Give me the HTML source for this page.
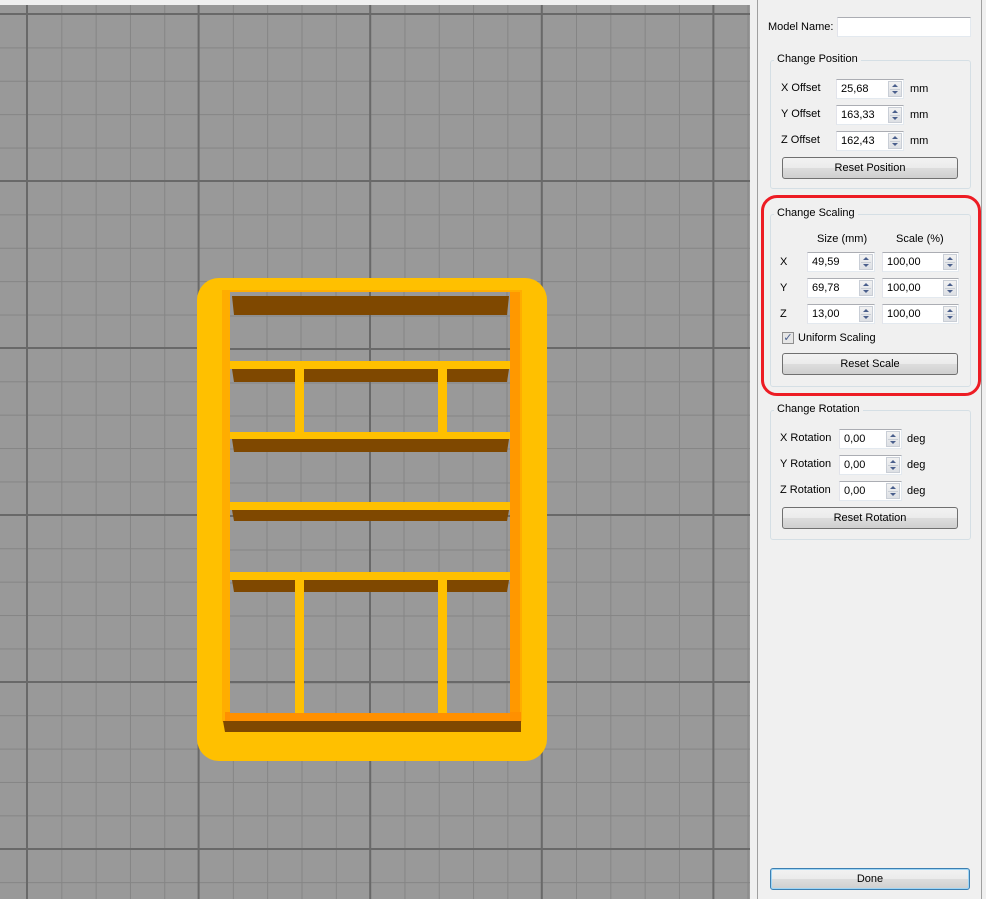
<!DOCTYPE html>
<html><head><meta charset="utf-8"><style>
*{margin:0;padding:0;box-sizing:border-box}
body{width:986px;height:899px;overflow:hidden;background:#f0f0f0;font-family:"Liberation Sans",sans-serif;font-size:11px;color:#000;position:relative}
#vp{position:absolute;left:0;top:5px;width:750px;height:894px;background-color:#999;
background-image:
linear-gradient(90deg,#696969 2px,transparent 2px),
linear-gradient(180deg,#696969 2px,transparent 2px),
linear-gradient(90deg,#858585 1px,transparent 1px),
linear-gradient(180deg,#858585 1px,transparent 1px);
background-size:171.6px 100%,100% 167px,34.32px 100%,100% 33.4px;
background-position:26px 0,0 8px,27px 0,0 9px}
.a{position:absolute}
.panel{position:absolute;left:750px;top:0;width:236px;height:899px;background:#f0f0f0}
.sep{position:absolute;left:757px;top:0;width:1px;height:899px;background:#a0a0a0}
.sep2{position:absolute;left:981px;top:0;width:1px;height:899px;background:#a0a0a0}
.grp{position:absolute;border:1px solid #d5dfe5;border-radius:3px}
.gt{position:absolute;background:#f0f0f0;padding:0 3px;line-height:13px}
.lbl{position:absolute;line-height:13px}
.in{position:absolute;height:20px;background:#fff;border:1px solid #abadb3;border-color:#abadb3 #e3e9ef #e3e9ef #e2e3ea;line-height:18px;padding-left:4px}
.sp{position:absolute;right:1px;top:1px;width:14px;height:16px;border:1px solid #c9ced6;background:linear-gradient(#f2f2f2,#dde0e5)}
.sp:before{content:"";position:absolute;left:3px;top:2px;border:3px solid transparent;border-bottom:3px solid #4a5f8c;border-top:0}
.sp:after{content:"";position:absolute;left:3px;bottom:2px;border:3px solid transparent;border-top:3px solid #4a5f8c;border-bottom:0}
.sp i{position:absolute;left:1px;right:1px;top:7px;height:1px;background:#c9ced6}
.btn{position:absolute;height:22px;border:1px solid #707070;border-radius:3px;background:linear-gradient(#f2f2f2 0,#ebebeb 50%,#dddddd 51%,#cfcfcf 100%);text-align:center;line-height:20px}
</style></head><body>
<div id="vp"></div>
<svg class="a" style="left:0;top:0" width="750" height="899">
<rect x="197" y="278" width="350" height="483" rx="22" fill="#ffc000"/>
<rect x="222" y="290" width="300" height="432" fill="#ffad00"/>
<rect x="510" y="292" width="10" height="420" fill="#ff9800"/>
<rect x="225" y="712" width="296" height="10" fill="#ff9000"/>
<rect x="230" y="292" width="280" height="421" fill="#999"/>
<g stroke="#858585" stroke-width="1">
<line x1="230" y1="349" x2="510" y2="349"/><line x1="230" y1="416" x2="510" y2="416"/><line x1="230" y1="483" x2="510" y2="483"/><line x1="230" y1="550" x2="510" y2="550"/><line x1="230" y1="616" x2="510" y2="616"/><line x1="230" y1="649" x2="510" y2="649"/><line x1="230" y1="449" x2="510" y2="449"/><line x1="230" y1="383" x2="510" y2="383"/><line x1="230" y1="316" x2="510" y2="316"/><line x1="230" y1="516" x2="510" y2="516"/><line x1="230" y1="583" x2="510" y2="583"/><line x1="230" y1="683" x2="510" y2="683"/>
<line x1="267" y1="292" x2="267" y2="713"/><line x1="301" y1="292" x2="301" y2="713"/><line x1="336" y1="292" x2="336" y2="713"/><line x1="404" y1="292" x2="404" y2="713"/><line x1="439" y1="292" x2="439" y2="713"/><line x1="473" y1="292" x2="473" y2="713"/><line x1="507" y1="292" x2="507" y2="713"/>
</g>
<line x1="370" y1="292" x2="370" y2="713" stroke="#696969" stroke-width="2"/>
<line x1="230" y1="682" x2="510" y2="682" stroke="#696969" stroke-width="2"/>
<line x1="230" y1="349" x2="510" y2="349" stroke="#696969" stroke-width="2"/>
<line x1="230" y1="516" x2="510" y2="516" stroke="#696969" stroke-width="2"/>
<polygon points="232,296 509,296 507,315 234,315" fill="#7f4800"/>
<g fill="#ffc000">
<rect x="230" y="361" width="280" height="8"/><rect x="230" y="432" width="280" height="7"/><rect x="230" y="502" width="280" height="8"/><rect x="230" y="572" width="280" height="8"/>
<rect x="295" y="368" width="9" height="65"/><rect x="438" y="368" width="9" height="65"/>
<rect x="295" y="579" width="9" height="134"/><rect x="438" y="579" width="9" height="134"/>
</g>
<g fill="#7f4800">
<polygon points="232,369 295,369 295,382 234,382"/><polygon points="304,369 438,369 438,382 304,382"/><polygon points="447,369 509,369 507,382 447,382"/>
<polygon points="232,439 509,439 507,452 234,452"/>
<polygon points="232,510 509,510 507,521 234,521"/>
<polygon points="232,580 295,580 295,592 234,592"/><polygon points="304,580 438,580 438,592 304,592"/><polygon points="447,580 509,580 507,592 447,592"/>
<polygon points="223,721 521,721 521,732 225,732"/>
</g>
</svg>
<div class="a" style="left:0;top:0;width:750px;height:5px;background:#f0f0f0"></div>
<div class="panel"></div>
<div class="sep"></div><div class="sep2"></div>

<div class="lbl" style="left:768px;top:21px">Model Name:</div>
<div class="in" style="left:837px;top:17px;width:134px"></div>

<div class="grp" style="left:770px;top:60px;width:201px;height:129px"></div>
<div class="gt" style="left:774px;top:53px">Change Position</div>
<div class="lbl" style="left:781px;top:82px">X Offset</div><div class="in" style="left:836px;top:79px;width:68px">25,68<div class="sp"><i></i></div></div><div class="lbl" style="left:910px;top:83px">mm</div>
<div class="lbl" style="left:781px;top:108px">Y Offset</div><div class="in" style="left:836px;top:105px;width:68px">163,33<div class="sp"><i></i></div></div><div class="lbl" style="left:910px;top:109px">mm</div>
<div class="lbl" style="left:781px;top:134px">Z Offset</div><div class="in" style="left:836px;top:131px;width:68px">162,43<div class="sp"><i></i></div></div><div class="lbl" style="left:910px;top:135px">mm</div>
<div class="btn" style="left:782px;top:157px;width:176px">Reset Position</div>

<div class="a" style="left:761px;top:195px;width:220px;height:201px;border:3px solid #ed1c24;border-radius:16px"></div>
<div class="grp" style="left:770px;top:214px;width:201px;height:173px"></div>
<div class="gt" style="left:774px;top:207px">Change Scaling</div>
<div class="lbl" style="left:817px;top:233px">Size (mm)</div><div class="lbl" style="left:896px;top:233px">Scale (%)</div>
<div class="lbl" style="left:780px;top:256px">X</div><div class="in" style="left:807px;top:252px;width:68px">49,59<div class="sp"><i></i></div></div><div class="in" style="left:882px;top:252px;width:77px">100,00<div class="sp"><i></i></div></div>
<div class="lbl" style="left:780px;top:282px">Y</div><div class="in" style="left:807px;top:278px;width:68px">69,78<div class="sp"><i></i></div></div><div class="in" style="left:882px;top:278px;width:77px">100,00<div class="sp"><i></i></div></div>
<div class="lbl" style="left:780px;top:308px">Z</div><div class="in" style="left:807px;top:304px;width:68px">13,00<div class="sp"><i></i></div></div><div class="in" style="left:882px;top:304px;width:77px">100,00<div class="sp"><i></i></div></div>
<div class="a" style="left:782px;top:332px;width:12px;height:12px;border:1px solid #8f8f8f;background:#e6e6e6;color:#4a5f8c;font-size:11px;line-height:10px;text-align:center">✓</div>
<div class="lbl" style="left:798px;top:332px">Uniform Scaling</div>
<div class="btn" style="left:782px;top:353px;width:176px">Reset Scale</div>

<div class="grp" style="left:770px;top:410px;width:201px;height:130px"></div>
<div class="gt" style="left:774px;top:403px">Change Rotation</div>
<div class="lbl" style="left:780px;top:432px">X Rotation</div><div class="in" style="left:839px;top:429px;width:63px">0,00<div class="sp"><i></i></div></div><div class="lbl" style="left:907px;top:433px">deg</div>
<div class="lbl" style="left:780px;top:458px">Y Rotation</div><div class="in" style="left:839px;top:455px;width:63px">0,00<div class="sp"><i></i></div></div><div class="lbl" style="left:907px;top:459px">deg</div>
<div class="lbl" style="left:780px;top:484px">Z Rotation</div><div class="in" style="left:839px;top:481px;width:63px">0,00<div class="sp"><i></i></div></div><div class="lbl" style="left:907px;top:485px">deg</div>
<div class="btn" style="left:782px;top:507px;width:176px">Reset Rotation</div>

<div class="btn" style="left:770px;top:868px;width:200px;border-color:#3c7fb1;box-shadow:inset 0 0 0 1px #9fd5f5">Done</div>
</body></html>
